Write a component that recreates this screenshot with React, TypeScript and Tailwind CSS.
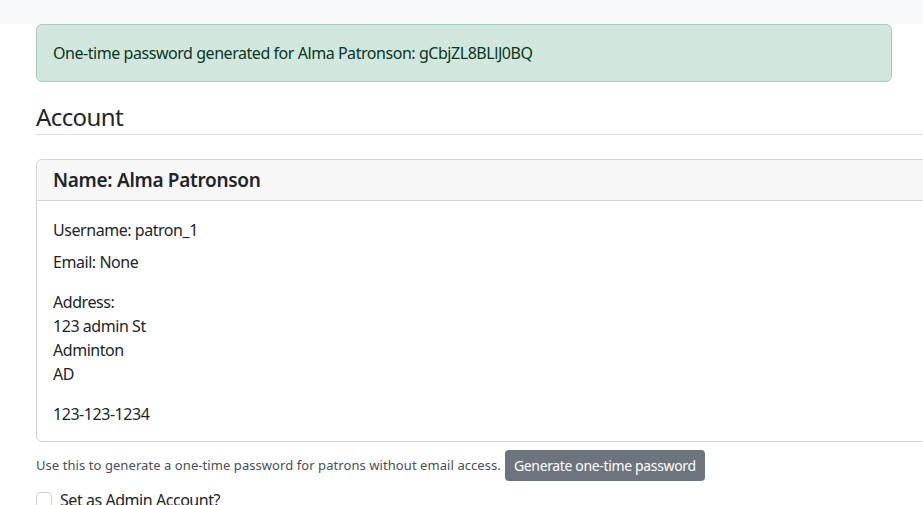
export default function App() {
  return (
    <div className="h-[505px] w-[923px] overflow-hidden bg-white font-['Noto_Sans',sans-serif] text-[16px] tracking-[-0.45px] text-[#212529]">
      <div className="h-[24px] bg-[#f8f9fa]" />
      <div className="pl-[36px]">
        <div className="w-[856px] rounded-[6px] border border-[#a3cfbb] bg-[#d1e7dd] px-[16px] py-[16px] leading-[24px] text-[#0a3622]">
          One-time password generated for Alma Patronson: gCbjZL8BLlJ0BQ
        </div>
        <h3 className="mt-[20px] w-[1000px] border-b border-[#dee2e6] pb-[2px] text-[24px] leading-[30px] tracking-[-0.6px]">Account</h3>
        <div className="mt-[24px] w-[1000px] rounded-[6px] border border-[#d3d3d3]">
          <div className="flex h-[41px] items-center rounded-t-[6px] border-b border-[#d3d3d3] bg-[#f7f7f7] px-[16px] text-[19px] font-semibold tracking-[-0.3px]">
            Name: Alma Patronson
          </div>
          <div className="px-[16px] pt-[17px] pb-[15px] leading-[24px]">
            <p>Username: patron_1</p>
            <p className="mt-[8px]">Email: None</p>
            <div className="mt-[16px]">
              <p>Address:</p>
              <p>123 admin St</p>
              <p>Adminton</p>
              <p>AD</p>
            </div>
            <p className="mt-[16px]">123-123-1234</p>
          </div>
        </div>
        <div className="mt-[8px] flex items-center gap-[4px]">
          <span className="text-[13px] tracking-[0.07px] text-[#495057]">Use this to generate a one-time password for patrons without email access.</span>
          <button className="h-[31px] rounded-[4px] bg-[#6c757d] px-[9px] text-[14px] tracking-[-0.35px] text-white">Generate one-time password</button>
        </div>
        <label className="mt-[7px] flex items-center gap-[8px]">
          <span className="h-[16px] w-[16px] rounded-[4px] border border-[#d3d3d3] bg-white" />
          <span>Set as Admin Account?</span>
        </label>
      </div>
    </div>
  );
}
